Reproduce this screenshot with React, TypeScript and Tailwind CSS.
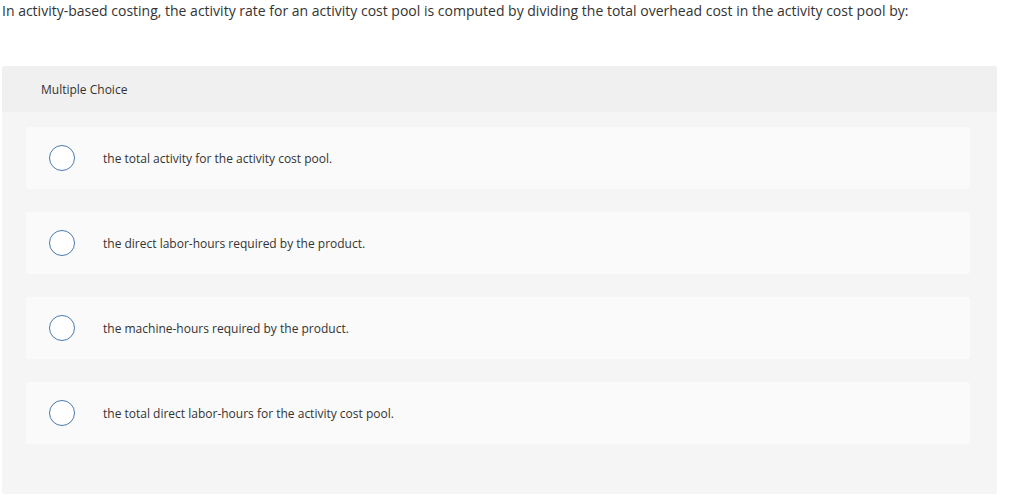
import { useState } from 'react';

const options = [
  'the total activity for the activity cost pool.',
  'the direct labor-hours required by the product.',
  'the machine-hours required by the product.',
  'the total direct labor-hours for the activity cost pool.',
];

export default function App() {
  const [picked, setPicked] = useState<number | null>(null);

  return (
    <div className="w-[1024px] h-[495px] bg-white overflow-hidden text-[#333] font-['Open_Sans','Liberation_Sans',sans-serif]">
      <p className="pl-[2px] pt-[1px] text-[14px] leading-[19px]">
        In activity-based costing, the activity rate for an activity cost pool is computed by dividing the total overhead cost in the activity cost pool by:
      </p>

      <div className="ml-[2px] mt-[46px] w-[995px] h-[428px] rounded-[3px] bg-[#f5f5f5] overflow-hidden">
        <div className="h-[46px] bg-[#f0f0f0] pl-[39px] pt-[2px] flex items-center text-[12px]">
          Multiple Choice
        </div>

        <div className="pt-[15px] pl-[24px] pr-[27px] flex flex-col gap-[23px]">
          {options.map((opt, i) => (
            <button
              key={opt}
              onClick={() => setPicked(i)}
              className="h-[62px] rounded-[3px] bg-[#fafafa] flex items-center pl-[23px] text-left"
            >
              <span className="w-[26px] h-[26px] rounded-full border-[1.5px] border-[#4a7aad] bg-white flex items-center justify-center shrink-0">
                {picked === i && <span className="w-[14px] h-[14px] rounded-full bg-[#4a7aad]" />}
              </span>
              <span className="ml-[28px] pt-[2px] text-[12px]">{opt}</span>
            </button>
          ))}
        </div>
      </div>
    </div>
  );
}
